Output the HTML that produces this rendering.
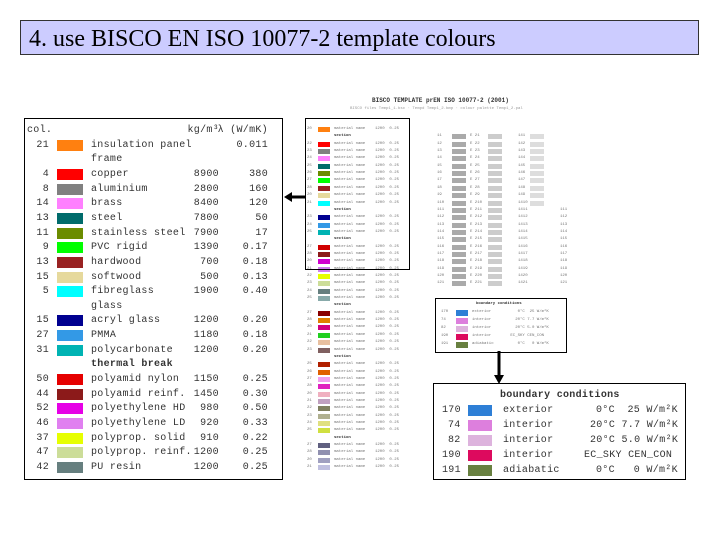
<!DOCTYPE html><html><head><style>
body{margin:0;width:720px;height:540px;background:#fff;position:relative;overflow:hidden;font-family:"Liberation Mono",monospace}
.a{position:absolute}
#t{left:20px;top:20px;width:679px;height:35px;background:#ccccff;border:1px solid #333;font:24px "Liberation Serif",serif;line-height:36px;padding-left:8px;box-sizing:border-box;color:#000}
.box{position:absolute;border:1.5px solid #000;background:#fff}
.r{position:absolute;left:0;height:14px;font-size:10px;color:#333;white-space:pre;width:100%;letter-spacing:0.3px}
.r span{position:absolute;top:1px}
.sw{position:absolute;height:11px}
.m{position:absolute;font-size:4px;color:#777;white-space:pre}
</style></head><body>
<div id="t" class="a">4. use BISCO EN ISO 10077-2 template colours</div>

<div class="box" style="left:24px;top:118px;width:257px;height:360px">
<div id="L"></div>
</div>

<div class="a" style="left:372px;top:97px;font-size:6px;color:#333;font-weight:bold">BISCO TEMPLATE prEN ISO 10077-2 (2001)</div>
<div class="a" style="left:350px;top:107px;font-size:4px;color:#999">BISCO files Temp1_1.bsc · Tempd Temp1_2.bmp · colour palette Temp1_2.pal</div>
<div id="M"></div>
<div class="box" style="left:305px;top:118px;width:103px;height:150px;background:transparent;border-width:1px"></div>

<div class="box" style="left:435px;top:298px;width:130px;height:53px;border-width:1px">
<div class="m" style="left:40px;top:3px;color:#333;font-weight:bold">boundary conditions</div>
<div class="m" style="left:5px;top:11px">170</div><div class="sw" style="left:20px;top:11px;width:12px;height:6px;background:#2e7fd6"></div><div class="m" style="left:36px;top:11px">exterior           0°C  25 W/m²K</div>
<div class="m" style="left:5px;top:19px">74</div><div class="sw" style="left:20px;top:19px;width:12px;height:6px;background:#dd7fdd"></div><div class="m" style="left:36px;top:19px">interior          20°C 7.7 W/m²K</div>
<div class="m" style="left:5px;top:27px">82</div><div class="sw" style="left:20px;top:27px;width:12px;height:6px;background:#ddb3dd"></div><div class="m" style="left:36px;top:27px">interior          20°C 5.0 W/m²K</div>
<div class="m" style="left:5px;top:35px">190</div><div class="sw" style="left:20px;top:35px;width:12px;height:6px;background:#dd0a5e"></div><div class="m" style="left:36px;top:35px">interior        EC_SKY CEN_CON</div>
<div class="m" style="left:5px;top:43px">191</div><div class="sw" style="left:20px;top:43px;width:12px;height:6px;background:#688040"></div><div class="m" style="left:36px;top:43px">adiabatic          0°C   0 W/m²K</div>
</div>

<svg class="a" style="left:0;top:0" width="720" height="540">
<line x1="305" y1="197" x2="291" y2="197" stroke="#000" stroke-width="3"/>
<polygon points="284,197 292,192 292,202" fill="#000"/>
<line x1="499" y1="351" x2="499" y2="376" stroke="#000" stroke-width="3"/>
<polygon points="499,384 494,375 504,375" fill="#000"/>
</svg>

<div class="box" style="left:433px;top:383px;width:251px;height:95px">
<div class="r" style="top:5px"><span style="left:66px;font-weight:bold">boundary conditions</span></div>
<div class="r" style="top:20px"><span style="left:8px">170</span><div class="sw" style="left:34px;top:1px;width:24px;background:#2e7fd6"></div><span style="left:69px">exterior</span><span style="left:162px">0°C  25 W/m²K</span></div>
<div class="r" style="top:35px"><span style="left:14px">74</span><div class="sw" style="left:34px;top:1px;width:24px;background:#dd7fdd"></div><span style="left:69px">interior</span><span style="left:156px">20°C 7.7 W/m²K</span></div>
<div class="r" style="top:50px"><span style="left:14px">82</span><div class="sw" style="left:34px;top:1px;width:24px;background:#ddb3dd"></div><span style="left:69px">interior</span><span style="left:156px">20°C 5.0 W/m²K</span></div>
<div class="r" style="top:65px"><span style="left:8px">190</span><div class="sw" style="left:34px;top:1px;width:24px;background:#dd0a5e"></div><span style="left:69px">interior</span><span style="left:150px">EC_SKY CEN_CON</span></div>
<div class="r" style="top:80px"><span style="left:8px">191</span><div class="sw" style="left:34px;top:1px;width:24px;background:#688040"></div><span style="left:69px">adiabatic</span><span style="left:162px">0°C   0 W/m²K</span></div>
</div>

<script>
var L=[["","","","kg/m³","λ (W/mK)",1],
["21","#ff8010","insulation panel","","0.011"],
["","","frame","",""],
["4","#ff0000","copper","8900","380"],
["8","#808080","aluminium","2800","160"],
["14","#ff80ff","brass","8400","120"],
["13","#006b6b","steel","7800","50"],
["11","#6b8c00","stainless steel","7900","17"],
["9","#00ff00","PVC rigid","1390","0.17"],
["13","#992222","hardwood","700","0.18"],
["15","#e6d99c","softwood","500","0.13"],
["5","#00ffff","fibreglass","1900","0.40"],
["","","glass","",""],
["15","#000090","acryl glass","1200","0.20"],
["27","#3399e6","PMMA","1180","0.18"],
["31","#00b3b3","polycarbonate","1200","0.20"],
["","","thermal break","","",2],
["50","#e60000","polyamid nylon","1150","0.25"],
["44","#8c1a1a","polyamid reinf.","1450","0.30"],
["52","#e600e6","polyethylene HD","980","0.50"],
["46","#e080f0","polyethylene LD","920","0.33"],
["37","#e6ff00","polyprop. solid","910","0.22"],
["47","#ccdd99","polyprop. reinf.","1200","0.25"],
["42","#667f7f","PU resin","1200","0.25"]];
var h="";L.forEach(function(r,i){var y=5+i*14.65;var fw=r[5]==2?"font-weight:bold;":"";
h+='<div class="r" style="top:'+y+'px;'+fw+'">'+(i==0?'<span style="left:2px">col.</span>':'<span style="right:233px">'+r[0]+'</span>')+(r[1]?'<div class="sw" style="left:32px;top:1px;width:26px;background:'+r[1]+'"></div>':'')+'<span style="left:66px">'+r[2]+'</span><span style="right:63px">'+r[3]+'</span><span style="right:14px">'+r[4]+'</span></div>';});
document.getElementById("L").innerHTML=h;
var M=["#ff8010","","#ff0000","#808080","#ff80ff","#006b6b","#6b8c00","#00ff00","#992222","#e6d99c","#00ffff","","#000090","#3399e6","#00b3b3","","#d00000","#8c1a1a","#d000d0","#d080f0","#e6ff00","#ccdd99","#667f7f","#88aaaa","","#880000","#e08000","#d00080","#20d020","#e8c0a0","#806060","","#b02000","#e06000","#f0a0f0","#e020c0","#f0b0c0","#c0a0c0","#808060","#b0b090","#e0e080","#d0e040","","#606080","#9090b0","#a0a0c0","#c0c0e0"];
var s="";M.forEach(function(c,i){var y=127+i*7.35;
s+='<div class="m" style="left:307px;top:'+y+'px">'+(c?'2'+i%9:'')+'</div>';
if(c)s+='<div class="sw" style="left:318px;top:'+y+'px;width:12px;height:5px;background:'+c+'"></div><div class="m" style="left:334px;top:'+y+'px">material name</div><div class="m" style="left:375px;top:'+y+'px">1200  0.25</div>';
else s+='<div class="m" style="left:334px;top:'+y+'px;color:#333;font-weight:bold">section</div>';
if(i<22&&i>0){s+='<div class="m" style="left:437px;top:'+y+'px">1'+i+'</div><div class="sw" style="left:452px;top:'+y+'px;width:14px;height:5px;background:#aaa"></div><div class="m" style="left:470px;top:'+y+'px">E 2'+i+'</div><div class="sw" style="left:488px;top:'+y+'px;width:14px;height:5px;background:#ccc"></div><div class="m" style="left:518px;top:'+y+'px">14'+i+'</div>'+(i<11?'<div class="sw" style="left:530px;top:'+y+'px;width:14px;height:5px;background:#ddd"></div>':'<div class="m" style="left:560px;top:'+y+'px">1'+i+'</div>');}
});
document.getElementById("M").innerHTML=s;
</script>
</body></html>
